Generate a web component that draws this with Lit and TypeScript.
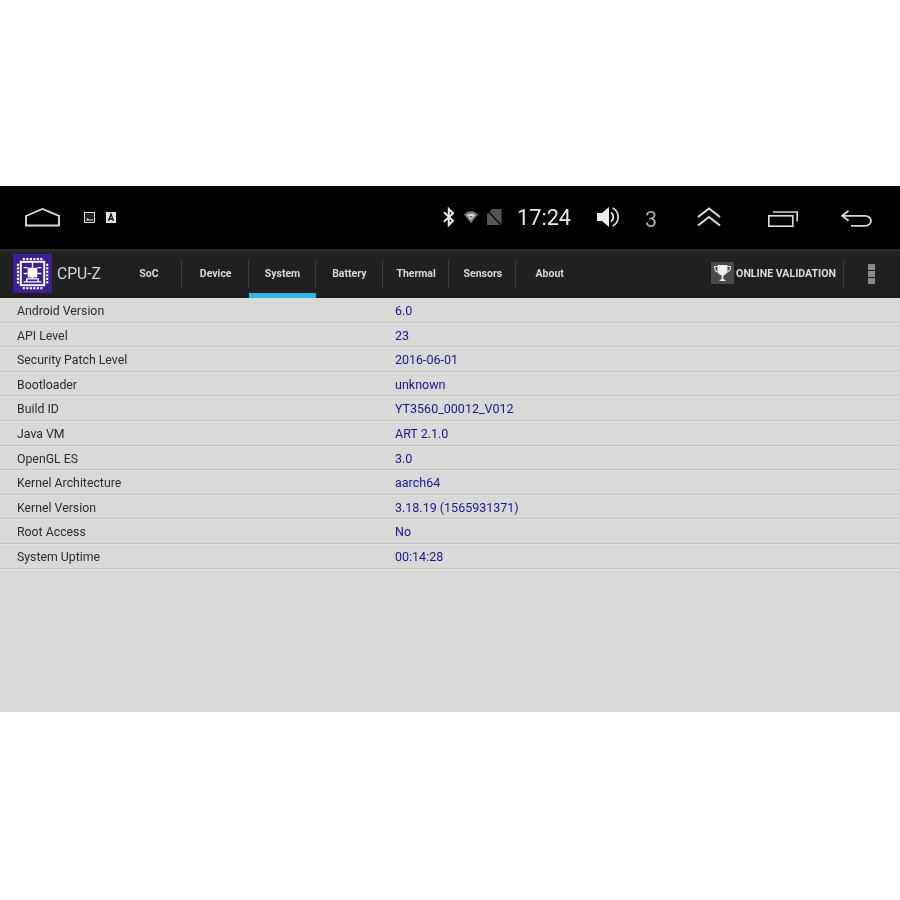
import { LitElement, html, css, svg } from "lit";
import { customElement } from "lit/decorators.js";

const TABS = ["SoC", "Device", "System", "Battery", "Thermal", "Sensors", "About"];
const ROWS: [string, string][] = [
  ["Android Version", "6.0"],
  ["API Level", "23"],
  ["Security Patch Level", "2016-06-01"],
  ["Bootloader", "unknown"],
  ["Build ID", "YT3560_00012_V012"],
  ["Java VM", "ART 2.1.0"],
  ["OpenGL ES", "3.0"],
  ["Kernel Architecture", "aarch64"],
  ["Kernel Version", "3.18.19 (1565931371)"],
  ["Root Access", "No"],
  ["System Uptime", "00:14:28"],
];

const pins = () => {
  const out = [];
  for (let i = 0; i < 6; i++) {
    const p = 10 + i * 3.6;
    out.push(svg`<rect x=${p} y="4" width="2.2" height="2.2"/><rect x=${p} y="34" width="2.2" height="2.2"/><rect x="4" y=${p} width="2.2" height="2.2"/><rect x="34" y=${p} width="2.2" height="2.2"/>`);
  }
  return out;
};

@customElement("app-root")
export class AppRoot extends LitElement {
  static styles = css`
    :host { display: block; width: 900px; height: 900px; background: #fff; overflow: hidden; font-family: Roboto, "Liberation Sans", sans-serif; }
    .device { margin-top: 186px; height: 526px; display: flex; flex-direction: column; filter: blur(0.35px); }
    .status { height: 63px; background: #000; display: flex; align-items: center; flex: none; }
    .status svg { display: block; flex: none; }
    .home { margin-left: 25px; }
    .pic { margin-left: 24px; margin-top: -1px; }
    .a { margin-left: 11px; margin-top: -1px; }
    .bt { margin-left: 327px; margin-top: -1px; }
    .wifi { margin-left: 9px; margin-top: -1px; }
    .sim { margin-left: 8px; margin-top: -1px; }
    .time { margin-left: 15px; width: 55px; color: #e8e8e8; font-size: 21.7px; line-height: 24px; margin-top: 1px; white-space: nowrap; }
    .vol { margin-left: 25px; margin-top: -2px; }
    .num { margin-left: 25px; width: 13px; color: #a9a9a9; font-size: 21.5px; line-height: 24px; margin-top: 5px; }
    .up { margin-left: 39px; margin-top: -2px; }
    .rec { margin-left: 47px; margin-top: 1px; }
    .back { margin-left: 43px; margin-top: 1px; }

    .bar { height: 49px; background: #202020; border-top: 3px solid #2a2a2a; box-sizing: border-box; box-shadow: inset 0 -1px 0 #1a1a1a; display: flex; align-items: stretch; flex: none; }
    .logo { display: flex; align-items: center; width: 115.5px; flex: none; padding-left: 13px; box-sizing: border-box; margin-top: -2px; }
    .logo svg { display: block; flex: none; margin-top: -2px; }
    .logo span { margin-left: 5px; margin-top: -1px; color: #d6d6d6; font-size: 15.7px; white-space: nowrap; }
    .tabs { display: flex; flex: none; margin-top: -2px; }
    .tab { width: 66.8px; box-sizing: border-box; display: flex; align-items: center; justify-content: center; color: #d8d8d8; font-size: 10.5px; font-weight: 700; position: relative; padding-bottom: 2px; }
    .tab::after { content: ""; position: absolute; right: 0; top: 10px; bottom: 10px; width: 1px; background: #3c3c3c; }
    .tab:last-child::after { display: none; }
    .tab.on::before { content: ""; position: absolute; left: 0; right: 0; bottom: 0; height: 5px; background: #33b5e5; }
    .actions { margin-left: 128px; display: flex; align-items: center; flex: none; margin-top: -2px; }
    .trophy { width: 23px; height: 22px; background: #4a4a4a; display: flex; align-items: center; justify-content: center; margin-top: -2px; flex: none; }
    .val { margin-left: 2px; color: #dcdcdc; font-size: 10.6px; font-weight: 700; white-space: nowrap; width: 107px; margin-top: -2px; }
    .sep { width: 1px; align-self: stretch; margin: 10px 0; background: #3c3c3c; flex: none; }
    .dots { margin-left: 24px; display: flex; flex-direction: column; gap: 1px; margin-top: -1px; }
    .dots i { display: block; width: 7px; height: 6px; background: #8a8a8a; }

    .list { flex: 1; background: #d9d9d9; }
    .row { height: 24.6px; box-sizing: border-box; border-bottom: 1px solid #c4c4c4; box-shadow: 0 1px 0 #e4e4e4; display: flex; align-items: baseline; padding-top: 3px; line-height: 20px; }
    .k { width: 395px; padding-left: 17px; box-sizing: border-box; color: #2a2a2a; flex: none; font-size: 12.3px; }
    .v { color: #17178a; font-size: 12.5px; }
  `;

  render() {
    return html`
      <div class="device">
        <div class="status">
          <svg class="home" width="35" height="19" viewBox="0 0 35 19" fill="none" stroke="#d8d8d8" stroke-width="1.9"><path d="M1 8 L17.5 1 L34 8 V17.5 H1 Z"/></svg>
          <svg class="pic" width="11" height="11" viewBox="0 0 11 11"><rect x=".5" y=".5" width="10" height="10" fill="#222" stroke="#ddd"/><path d="M2 8.5 L3.5 6 L5 7.5 H9 V8.5 Z" fill="#ddd"/></svg>
          <svg class="a" width="10" height="11" viewBox="0 0 10 11"><rect width="10" height="11" fill="#e6e6e6"/><path d="M2.5 9 L5 2 L7.5 9 M3.5 7 H6.5" fill="none" stroke="#111" stroke-width="1.3"/></svg>
          <svg class="bt" width="12" height="20" viewBox="0 0 12 20" fill="none" stroke="#e8e8e8" stroke-width="2"><path d="M1 5.2 L10 13.8 L5.8 18 V2 L10 6.2 L1 14.8"/></svg>
          <svg class="wifi" width="14" height="12" viewBox="0 0 14 12"><path d="M0 3.5 C4 -1 10 -1 14 3.5 L7 12 Z" fill="#7a7a7a"/><path d="M3 4.2 C5.2 2.4 8.8 2.4 11 4.2 L7 9 Z" fill="#d8d8d8"/><path d="M5.2 5 H8.8 L7 7.2 Z" fill="#666"/></svg>
          <svg class="sim" width="16" height="17" viewBox="0 0 16 17"><path d="M6 0 H15.5 V16 H1 V5 Z" fill="#555"/><path d="M1 1 L15.5 16.5" stroke="#000" stroke-width="1.2"/></svg>
          <span class="time">17:24</span>
          <svg class="vol" width="23" height="22" viewBox="0 0 23 22"><path d="M0 7 H5 L12 1 V21 L5 15 H0 Z" fill="#f0f0f0"/><path d="M14 6.5 A5.5 5.5 0 0 1 14 15.5" fill="none" stroke="#e4e4e4" stroke-width="1.8"/><path d="M15.5 2 A10 10 0 0 1 15.5 20" fill="none" stroke="#d4d4d4" stroke-width="1.8"/></svg>
          <span class="num">3</span>
          <svg class="up" width="24" height="20" viewBox="0 0 24 20" fill="none" stroke="#dcdcdc" stroke-width="2.1"><path d="M1 10 L12 1.5 L23 10 M1 18.5 L12 10 L23 18.5"/></svg>
          <svg class="rec" width="30" height="17" viewBox="0 0 30 17" fill="none" stroke="#d8d8d8" stroke-width="1.7"><rect x=".8" y="5.8" width="24" height="10.4"/><path d="M5 2 H29.2 V11.5"/></svg>
          <svg class="back" width="31" height="17" viewBox="0 0 31 17" fill="none" stroke="#d8d8d8" stroke-width="1.8"><path d="M7.5 .8 L1.2 5.8 L7.5 10.8 M1.2 5.8 H24 A6 5 0 0 1 24 15.8 H10"/></svg>
        </div>
        <div class="bar">
          <div class="logo">
            <svg width="39" height="39" viewBox="0 0 40 40"><rect width="40" height="40" fill="#3e1f93"/><g fill="#fff">${pins()}</g><rect x="8" y="8" width="24" height="24" fill="none" stroke="#fff" stroke-width="2"/><rect x="15" y="14" width="10" height="10" rx="1" fill="#fff"/><path d="M20 8 V14 M11 14 H15 M11 20 H15 M25 14 H29 M25 20 H29 M11 28.5 H29 M14 28.5 V25.5 H20 V23 M26 28.5 V25.5 H20" fill="none" stroke="#fff" stroke-width="1.3"/></svg>
            <span>CPU-Z</span>
          </div>
          <div class="tabs">
            ${TABS.map((t) => html`<div class="tab ${t === "System" ? "on" : ""}">${t}</div>`)}
          </div>
          <div class="actions">
            <div class="trophy">
              <svg width="19" height="19" viewBox="0 0 19 19"><path d="M4.5 1 H14.5 V6 C14.5 9.5 12 11 10.3 11.5 V14.5 L13 17 H6 L8.7 14.5 V11.5 C7 11 4.5 9.5 4.5 6 Z" fill="#f0f0f0"/><path d="M4.5 2.5 H1.5 C1.5 6 3 8 6 8.5 M14.5 2.5 H17.5 C17.5 6 16 8 13 8.5" fill="none" stroke="#e4e4e4" stroke-width="1.2"/></svg>
            </div>
            <span class="val">ONLINE VALIDATION</span>
            <div class="sep"></div>
            <div class="dots"><i></i><i></i><i></i></div>
          </div>
        </div>
        <div class="list">
          ${ROWS.map(([k, v]) => html`<div class="row"><span class="k">${k}</span><span class="v">${v}</span></div>`)}
        </div>
      </div>
    `;
  }
}
